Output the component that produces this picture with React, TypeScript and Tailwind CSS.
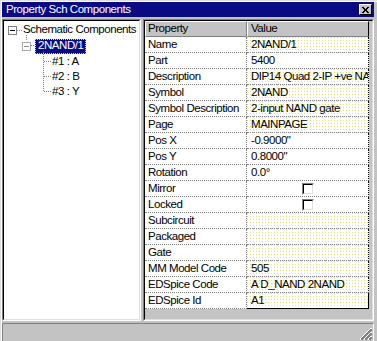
import React from "react";

type Row = { k: string; v?: string; dots?: boolean; check?: boolean };

const rows: Row[] = [
  { k: "Name", v: "2NAND/1", dots: true },
  { k: "Part", v: "5400" },
  { k: "Description", v: "DIP14 Quad 2-IP +ve NAND", dots: true },
  { k: "Symbol", v: "2NAND", dots: true },
  { k: "Symbol Description", v: "2-input NAND gate", dots: true },
  { k: "Page", v: "MAINPAGE", dots: true },
  { k: "Pos X", v: "-0.9000\"" },
  { k: "Pos Y", v: "0.8000\"" },
  { k: "Rotation", v: "0.0°" },
  { k: "Mirror", check: true },
  { k: "Locked", check: true },
  { k: "Subcircuit", v: "", dots: true },
  { k: "Packaged", v: "", dots: true },
  { k: "Gate", v: "", dots: true },
  { k: "MM Model Code", v: "505", dots: true },
  { k: "EDSpice Code", v: "A D_NAND 2NAND", dots: true },
  { k: "EDSpice Id", v: "A1", dots: true },
];

function Checkbox() {
  return (
    <div className="w-[12px] h-[12px] border border-t-[#808080] border-l-[#808080] border-b-white border-r-white">
      <div className="w-full h-full border border-t-black border-l-black border-b-[#dfdfdf] border-r-[#dfdfdf] bg-white" />
    </div>
  );
}

function MinusBox({ faded }: { faded?: boolean }) {
  return (
    <div
      className={
        "w-[9px] h-[9px] border bg-white flex items-center justify-center shrink-0 " +
        (faded ? "border-[#a8a8a8]" : "border-[#808080]")
      }
    >
      <div className={"w-[5px] h-px " + (faded ? "bg-[#909090]" : "bg-black")} />
    </div>
  );
}

export default function App() {
  return (
    <div className="w-[377px] h-[341px] overflow-hidden bg-[#c3c3c3] font-['Liberation_Sans',Arial,sans-serif] text-[11.5px] tracking-[-0.45px] leading-none text-black">
      <div className="h-full border-t border-l border-[#dfdfdf]">
        <div className="h-full border-t border-l border-white flex flex-col pr-[3px]">
          {/* Title bar */}
          <div className="h-[15px] bg-[#0a0a82] flex items-center justify-between pl-[4px] pr-[2px]">
            <span className="text-white whitespace-nowrap">Property Sch Components</span>
            <div className="w-[13px] h-[11px] border border-t-white border-l-white border-b-black border-r-black bg-[#c3c3c3] flex items-center justify-center">
              <svg width="7" height="6" viewBox="0 0 7 6" shapeRendering="crispEdges">
                <path d="M0 0h2v1h-2zM5 0h2v1h-2zM1 1h2v1h-2zM4 1h2v1h-2zM2 2h3v2h-3zM1 4h2v1h-2zM4 4h2v1h-2zM0 5h2v1h-2zM5 5h2v1h-2z" fill="#000" />
              </svg>
            </div>
          </div>

          {/* Body */}
          <div className="mt-[2px] h-[302px] flex gap-[2px]">
            {/* Tree panel */}
            <div className="w-[139px] h-full border border-t-[#808080] border-l-[#808080] border-b-white border-r-white">
              <div className="relative w-full h-full border border-t-black border-l-black border-b-[#dfdfdf] border-r-[#dfdfdf] bg-white pt-[1px] overflow-hidden">
                <svg className="absolute left-0 top-0" width="60" height="80" shapeRendering="crispEdges">
                  <g stroke="#808080" strokeWidth="1" strokeDasharray="1 1">
                    <line x1="13" y1="9.5" x2="18" y2="9.5" />
                    <line x1="22.5" y1="14" x2="22.5" y2="20" />
                    <line x1="27" y1="24.5" x2="31" y2="24.5" />
                    <line x1="39.5" y1="31" x2="39.5" y2="71" />
                    <line x1="40" y1="40.5" x2="47" y2="40.5" />
                    <line x1="40" y1="55.5" x2="47" y2="55.5" />
                    <line x1="40" y1="70.5" x2="47" y2="70.5" />
                  </g>
                </svg>
                <div className="h-[16px] flex items-center pl-[4px] whitespace-nowrap">
                  <MinusBox />
                  <span className="ml-[6px]">Schematic Components</span>
                </div>
                <div className="h-[16px] flex items-center pl-[18px] whitespace-nowrap">
                  <MinusBox faded />
                  <span className="ml-[4px] h-[15px] px-[2px] flex items-center bg-[#0a0a82] text-white border border-dotted border-[#e8e800]">
                    2NAND/1
                  </span>
                </div>
                <div className="h-[15px] flex items-center pl-[48px] whitespace-nowrap">#1 : A</div>
                <div className="h-[15px] flex items-center pl-[48px] whitespace-nowrap">#2 : B</div>
                <div className="h-[15px] flex items-center pl-[48px] whitespace-nowrap">#3 : Y</div>
              </div>
            </div>

            {/* Grid panel */}
            <div className="w-[231px] h-full border border-t-[#808080] border-l-[#808080] border-b-white border-r-white">
              <div className="w-full h-full border border-t-black border-l-black border-b-[#dfdfdf] border-r-[#dfdfdf] bg-[#c3c3c3] flex flex-col">
                {/* header */}
                <div className="flex h-[16px] w-[224px]">
                  <div className="w-[102px] h-full border border-t-white border-l-white border-b-[#808080] border-r-[#808080] flex items-center pl-[2px]">
                    Property
                  </div>
                  <div className="w-[122px] h-full border border-t-white border-l-white border-b-[#808080] border-r-black flex items-center pl-[3px]">
                    Value
                  </div>
                </div>
                {rows.map((r, i) => {
                  const last = i === rows.length - 1;
                  return (
                    <div key={r.k} className="flex h-[16px] w-[224px]">
                      <div className="w-[102px] h-full bg-white border-r border-r-[#808080] border-b border-dotted border-b-[#808080] flex items-center pl-[3px] whitespace-nowrap overflow-hidden">
                        {r.k}
                      </div>
                      <div
                        className={
                          "w-[122px] h-full border-r border-r-black border-b flex items-center pl-[4px] whitespace-nowrap overflow-hidden " +
                          (last ? "border-solid border-b-black " : "border-dotted border-b-[#808080] ") +
                          (r.dots
                            ? "bg-white bg-[linear-gradient(to_bottom,transparent_1px,#fff_1px),linear-gradient(to_right,#e6e64a_1px,#fff_1px)] bg-[length:3px_3px]"
                            : "bg-white")
                        }
                      >
                        {r.check ? (
                          <div className="w-full flex justify-center pr-[4px]">
                            <Checkbox />
                          </div>
                        ) : (
                          r.v
                        )}
                      </div>
                    </div>
                  );
                })}
              </div>
            </div>
          </div>

          {/* Status bar */}
          <div className="mt-[2px] flex-1 border border-t-[#808080] border-l-[#808080] border-b-0 border-r-white flex justify-end items-end">
            <svg width="12" height="12" viewBox="0 0 12 12" shapeRendering="crispEdges" className="mb-[1px] mr-[1px]">
              <g strokeWidth="1">
                <line x1="11.5" y1="0" x2="0" y2="11.5" stroke="#ffffff" />
                <line x1="11.5" y1="1" x2="1" y2="11.5" stroke="#808080" />
                <line x1="11.5" y1="2" x2="2" y2="11.5" stroke="#808080" />
                <line x1="11.5" y1="4" x2="4" y2="11.5" stroke="#ffffff" />
                <line x1="11.5" y1="5" x2="5" y2="11.5" stroke="#808080" />
                <line x1="11.5" y1="6" x2="6" y2="11.5" stroke="#808080" />
                <line x1="11.5" y1="8" x2="8" y2="11.5" stroke="#ffffff" />
                <line x1="11.5" y1="9" x2="9" y2="11.5" stroke="#808080" />
                <line x1="11.5" y1="10" x2="10" y2="11.5" stroke="#808080" />
              </g>
            </svg>
          </div>
        </div>
      </div>
    </div>
  );
}
